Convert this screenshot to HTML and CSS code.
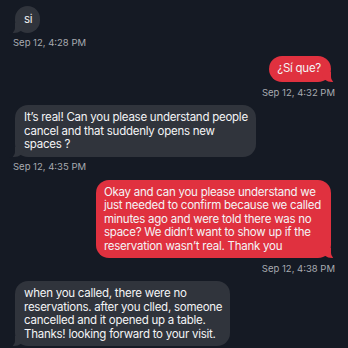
FILE: index.html
```html
<!DOCTYPE html>
<html>
<head>
<meta charset="utf-8">
<link rel="stylesheet" href="styles.css">
</head>
<body>
<div class="chat">
  <div class="msg in">
    <div class="bubble single">si</div>
    <div class="time">Sep 12, 4:28 PM</div>
  </div>
  <div class="msg out">
    <div class="bubble single">¿Sí que?</div>
    <div class="time">Sep 12, 4:32 PM</div>
  </div>
  <div class="msg in">
    <div class="bubble">It’s real! Can you please understand people<br>cancel and that suddenly opens new<br>spaces ?</div>
    <div class="time">Sep 12, 4:35 PM</div>
  </div>
  <div class="msg out">
    <div class="bubble">Okay and can you please understand we<br>just needed to confirm because we called<br>minutes ago and were told there was no<br>space? We didn’t want to show up if the<br>reservation wasn’t real. Thank you</div>
    <div class="time">Sep 12, 4:38 PM</div>
  </div>
  <div class="msg in">
    <div class="bubble">when you called, there were no<br>reservations. after you clled, someone<br>cancelled and it opened up a table.<br>Thanks! looking forward to your visit.</div>
  </div>
</div>
</body>
</html>
```
FILE: styles.css
```css
html, body {
  margin: 0;
  padding: 0;
  background: #151a24;
}
body {
  width: 348px;
  height: 348px;
  overflow: hidden;
  font-family: Inter, "Noto Sans", sans-serif;
}
.chat {
  display: flex;
  flex-direction: column;
  padding: 6px 13px 0 13px;
  gap: 6.5px;
}
.msg {
  display: flex;
  flex-direction: column;
}
.msg.in { align-items: flex-start; }
.msg.out { align-items: flex-end; }
.bubble {
  position: relative;
  font-size: 11.5px;
  letter-spacing: -0.25px;
  line-height: 13.5px;
  color: #f4f4f6;
  padding: 6px 8px 5px 9px;
  border-radius: 13px;
}
.bubble.single {
  padding-top: 6.5px;
  padding-bottom: 6.5px;
}
.msg.in .bubble {
  background: #30343c;
  margin-left: 2px;
}
.msg.out .bubble {
  background: #e0313f;
  margin-right: 4px;
  padding-left: 8px;
  padding-right: 10px;
}
.msg.in .bubble::before {
  content: "";
  position: absolute;
  left: -3px;
  bottom: 0;
  width: 12px;
  height: 10px;
  background: #30343c;
  border-bottom-right-radius: 10px 8px;
}
.msg.in .bubble::after {
  content: "";
  position: absolute;
  left: -8px;
  bottom: -1px;
  width: 8px;
  height: 11px;
  background: #151a24;
  border-bottom-right-radius: 6px 6px;
}
.msg.out .bubble::before {
  content: "";
  position: absolute;
  right: -3px;
  bottom: 0;
  width: 12px;
  height: 10px;
  background: #e0313f;
  border-bottom-left-radius: 10px 8px;
}
.msg.out .bubble::after {
  content: "";
  position: absolute;
  right: -8px;
  bottom: -1px;
  width: 8px;
  height: 11px;
  background: #151a24;
  border-bottom-left-radius: 6px 6px;
}
.time {
  font-size: 9.5px;
  line-height: 12px;
  color: #a8abb1;
  margin-top: 4.5px;
}
```
